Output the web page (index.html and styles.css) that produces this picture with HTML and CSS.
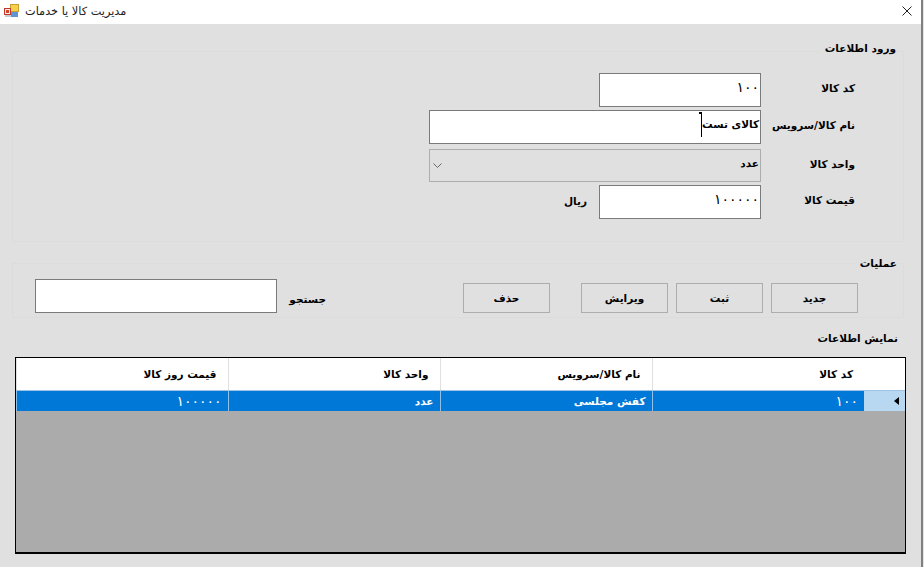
FILE: index.html

```html
<!DOCTYPE html>
<html lang="fa">
<head>
    <meta charset="UTF-8">
    <title>مدیریت کالا یا خدمات</title>
    <link rel="stylesheet" href="styles.css">
</head>
<body>
    <div class="window">
        <div class="titlebar">
            <svg class="app-icon" width="15" height="14" viewBox="0 0 15 14">
                <rect x="6.5" y="0.5" width="8" height="7" fill="#f6d24a" stroke="#c9a030"/>
                <rect x="0.5" y="4.5" width="6" height="6" fill="#fbe9e4" stroke="#c0392b"/>
                <rect x="2" y="6" width="3" height="3" fill="#d2452f"/>
                <rect x="7" y="8" width="7" height="5" fill="#5f95d6"/>
                <rect x="1" y="11" width="6" height="2" fill="#c4ccd6"/>
            </svg>
            <span class="title-text" dir="rtl">مدیریت کالا یا خدمات</span>
            <svg class="close-icon" width="10" height="10" viewBox="0 0 10 10">
                <path d="M0.5 0.5 L9.5 9.5 M9.5 0.5 L0.5 9.5" stroke="#222" stroke-width="1" fill="none"/>
            </svg>
        </div>

        <div class="content" dir="rtl">
            <fieldset class="group group-info">
                <legend>ورود اطلاعات</legend>
                <div class="form-row">
                    <label>کد کالا</label>
                    <div class="field field-sm num">۱۰۰</div>
                </div>
                <div class="form-row">
                    <label>نام کالا/سرویس</label>
                    <div class="field field-lg">کالای تست<span class="caret"></span></div>
                </div>
                <div class="form-row form-row-combo">
                    <label>واحد کالا</label>
                    <div class="combo">
                        <span>عدد</span>
                        <svg width="9" height="5" viewBox="0 0 9 5">
                            <path d="M0.5 0.5 L4.5 4.5 L8.5 0.5" stroke="#666" fill="none"/>
                        </svg>
                    </div>
                </div>
                <div class="form-row">
                    <label>قیمت کالا</label>
                    <div class="field field-sm num">۱۰۰۰۰۰</div>
                    <span class="unit">ریال</span>
                </div>
            </fieldset>

            <fieldset class="group group-ops">
                <legend>عملیات</legend>
                <div class="ops-row">
                    <button class="btn">جدید</button>
                    <button class="btn">ثبت</button>
                    <button class="btn">ویرایش</button>
                    <button class="btn btn-delete">حذف</button>
                    <span class="search-label">جستجو</span>
                    <div class="field field-search"></div>
                </div>
            </fieldset>

            <fieldset class="group group-list">
                <legend>نمایش اطلاعات</legend>
                <div class="grid-box">
                    <table class="grid">
                        <thead>
                            <tr>
                                <th class="row-head"></th>
                                <th>کد کالا</th>
                                <th>نام کالا/سرویس</th>
                                <th>واحد کالا</th>
                                <th>قیمت روز کالا</th>
                            </tr>
                        </thead>
                        <tbody>
                            <tr>
                                <td class="row-head"><span class="row-arrow"></span></td>
                                <td class="num">۱۰۰</td>
                                <td>کفش مجلسی</td>
                                <td>عدد</td>
                                <td class="num">۱۰۰۰۰۰</td>
                            </tr>
                        </tbody>
                    </table>
                </div>
            </fieldset>
        </div>
    </div>
</body>
</html>
```

FILE: styles.css

```css
html, body {
    margin: 0;
    padding: 0;
}

body {
    width: 924px;
    height: 567px;
    overflow: hidden;
    font-family: "DejaVu Sans", "Noto Sans", sans-serif;
    font-size: 10.5px;
    font-weight: bold;
    color: #000;
    background-color: #e4e4e4;
}

.window {
    box-sizing: border-box;
    display: flex;
    flex-direction: column;
    width: 923px;
    height: 567px;
    background-color: #e0e0e0;
    border-right: 2px solid #808080;
}

/* title bar */
.titlebar {
    box-sizing: border-box;
    display: flex;
    align-items: center;
    height: 24px;
    padding: 0 9px 2px 4px;
    background-color: #fff;
}
.app-icon { flex: none; }
.title-text {
    margin-left: 6px;
    font-size: 11.3px;
    font-weight: normal;
    color: #222;
}
.close-icon { margin-left: auto; }

/* groups */
.content {
    display: flex;
    flex-direction: column;
    padding: 0 17px 0 12px;
}
.group {
    box-sizing: border-box;
    margin: 0;
    padding: 0;
    min-width: 0;
    border: 1px solid #dcdcdc;
}
.group legend {
    padding: 0 0 0 6px;
    margin-right: 7px;
    line-height: 16px;
}
.group-info {
    height: 202px;
    margin-top: 16px;
    padding-top: 11px;
}
.group-info legend { padding-bottom: 6px; }
.group-ops {
    height: 63px;
    margin-top: 13px;
    padding-top: 8px;
}
.group-ops legend { margin-right: 6px; }
.group-list {
    height: 224px;
    margin: 12px -2px 0 0;
    margin-left: 3px;
    padding-top: 11px;
    border-color: transparent;
}

/* form */
.form-row {
    display: flex;
    align-items: center;
    margin-bottom: 3px;
    padding-right: 48px;
}
.form-row label {
    width: 94px;
    flex: none;
    margin-bottom: 4px;
}
.form-row-combo {
    margin-top: 5px;
}
.field {
    box-sizing: border-box;
    position: relative;
    height: 34px;
    padding: 5px 1px 0 0;
    line-height: 16px;
    background-color: #fff;
    border: 1px solid #7a7a7a;
}
.field-sm { width: 162px; }
.field-lg { width: 332px; }
.field-search { width: 242px; margin-right: 4px; }
.num {
    font-size: 14px;
    font-weight: normal;
}
.caret {
    position: absolute;
    top: 1px;
    width: 1px;
    height: 25px;
    background-color: #000;
}
.caret:before {
    content: '';
    position: absolute;
    top: 0;
    right: 1px;
    width: 2px;
    height: 2px;
    background-color: #000;
}
.combo {
    box-sizing: border-box;
    display: flex;
    align-items: center;
    justify-content: space-between;
    width: 332px;
    height: 33px;
    padding: 0 1px 0 3px;
    border: 1px solid #adadad;
}
.combo span { margin-bottom: 5px; }
.unit {
    margin-right: 12px;
    margin-bottom: 2px;
}

/* operations */
.ops-row {
    display: flex;
    align-items: flex-end;
    gap: 8px;
    padding-right: 45px;
}
.btn {
    width: 87px;
    height: 30px;
    padding: 0;
    font-family: inherit;
    font-size: 10.5px;
    font-weight: bold;
    color: #000;
    background-color: #e0e0e0;
    border: 1px solid #adadad;
}
.btn-delete { margin-right: 23px; }
.search-label {
    margin-right: 129px;
    margin-bottom: 8px;
}

/* data grid */
.grid-box {
    box-sizing: border-box;
    width: 891px;
    height: 197px;
    margin-right: -1px;
    background-color: #ababab;
    border: 1px solid #000;
    border-width: 1px 1px 2px 1px;
}
.grid {
    width: 889px;
    table-layout: fixed;
    border-collapse: collapse;
}
.grid th {
    box-sizing: border-box;
    width: 212px;
    height: 32px;
    padding: 0 11px 0 0;
    text-align: right;
    font-weight: bold;
    background-color: #fff;
    border-left: 1px solid #e0e0e0;
    border-bottom: 1px solid #9cc3e6;
}
.grid td {
    box-sizing: border-box;
    height: 21px;
    padding: 0 6px 0 0;
    color: #fff;
    background-color: #0078d7;
    border-left: 1px solid #8fc0ea;
}
.grid th.row-head {
    width: 41px;
    padding: 0;
    border-left: 0;
}
.grid td.row-head {
    padding: 0;
    background-color: #b8d8f2;
    border-left: 0;
}
.row-arrow {
    display: block;
    width: 0;
    height: 0;
    margin: 1px 6px 0 0;
    border-top: 4px solid transparent;
    border-bottom: 4px solid transparent;
    border-right: 5px solid #000;
}
```
